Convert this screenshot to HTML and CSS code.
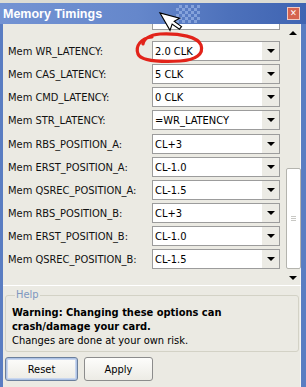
FILE: index.html
```html
<!DOCTYPE html>
<html lang="en">
<head>
<meta charset="UTF-8" />
<title>Memory Timings</title>
<link rel="stylesheet" href="styles.css">
</head>
<body>
<div class="topstrip"></div>
<div class="window">
  <div class="titlebar">
    <span class="title">Memory Timings</span>
    <span class="dither"></span>
    <span class="close">&#x2715;</span>
  </div>
  <div class="frame">
    <div class="client">
      <div class="scrollpane">
        <div class="list">
          <div class="stub"></div>
          <div class="group">
            <div class="row"><span class="label">Mem WR_LATENCY:</span><div class="combo"><span class="value">2.0 CLK</span><span class="drop"></span></div></div>
            <div class="row"><span class="label">Mem CAS_LATENCY:</span><div class="combo"><span class="value">5 CLK</span><span class="drop"></span></div></div>
            <div class="row"><span class="label">Mem CMD_LATENCY:</span><div class="combo"><span class="value">0 CLK</span><span class="drop"></span></div></div>
            <div class="row"><span class="label">Mem STR_LATENCY:</span><div class="combo"><span class="value">=WR_LATENCY</span><span class="drop"></span></div></div>
          </div>
          <div class="group second">
            <div class="row"><span class="label">Mem RBS_POSITION_A:</span><div class="combo"><span class="value">CL+3</span><span class="drop"></span></div></div>
            <div class="row"><span class="label">Mem ERST_POSITION_A:</span><div class="combo"><span class="value">CL-1.0</span><span class="drop"></span></div></div>
            <div class="row"><span class="label">Mem QSREC_POSITION_A:</span><div class="combo"><span class="value">CL-1.5</span><span class="drop"></span></div></div>
            <div class="row"><span class="label">Mem RBS_POSITION_B:</span><div class="combo"><span class="value">CL+3</span><span class="drop"></span></div></div>
            <div class="row"><span class="label">Mem ERST_POSITION_B:</span><div class="combo"><span class="value">CL-1.0</span><span class="drop"></span></div></div>
            <div class="row"><span class="label">Mem QSREC_POSITION_B:</span><div class="combo"><span class="value">CL-1.5</span><span class="drop"></span></div></div>
          </div>
        </div>
        <div class="scrollbar">
          <span class="arrow up"></span>
          <div class="track"><div class="thumb"><span class="grip"></span></div></div>
          <span class="arrow down"></span>
        </div>
      </div>
      <fieldset class="help">
        <legend>Help</legend>
        <p class="warn">Warning: Changing these options can crash/damage your card.</p>
        <p>Changes are done at your own risk.</p>
      </fieldset>
      <div class="buttons">
        <button class="btn default" type="button">Reset</button>
        <button class="btn apply" type="button">Apply</button>
      </div>
    </div>
  </div>
</div>

<svg class="scribble" width="306" height="387" viewBox="0 0 306 387" aria-hidden="true">
  <path d="M152 37 C141 38 135 46 138 54 C141 61 160 62 180 61 C196 60 204 54 201 45 C198 37 180 33 160 34 C150 35 144 38 143 44" fill="none" stroke="#e2231a" stroke-width="3.2" stroke-linecap="round"/>
</svg>
<svg class="cursor" width="306" height="387" viewBox="0 0 306 387" aria-hidden="true">
  <g transform="translate(160 13) rotate(-30) scale(1.25)">
    <path d="M0 0 L0 16 L4 12.5 L7 19 L9.5 18 L6.5 11.5 L11.5 11.5 Z" fill="#fff" stroke="#000" stroke-width="0.9" stroke-linejoin="miter"/>
  </g>
</svg>
</body>
</html>
```
FILE: styles.css
```css
body {
  margin: 0;
  width: 306px;
  height: 387px;
  overflow: hidden;
  background: #ebeae3;
  font-family: "DejaVu Sans Condensed", "DejaVu Sans", sans-serif;
  font-stretch: condensed;
  font-size: 11px;
  color: #000;
}

.topstrip {
  height: 3px;
  background: #dcdcd4;
}

.window {
  height: 384px;
  display: flex;
  flex-direction: column;
}

.titlebar {
  height: 21px;
  position: relative;
  display: flex;
  align-items: center;
  padding-left: 3px;
  background: linear-gradient(90deg, #7393d3 0%, #6587cb 45%, #4d71bb 75%, #3f64b2 100%);
}
.title {
  font-family: "Liberation Sans", Arial, sans-serif;
  font-stretch: normal;
  font-weight: bold;
  font-size: 12.5px;
  color: #fff;
  flex: 1;
}
.dither {
  position: absolute;
  left: 176px;
  top: 2px;
  width: 24px;
  height: 18px;
  background: conic-gradient(rgba(170,195,240,0.55) 25%, transparent 0 50%, rgba(170,195,240,0.55) 0 75%, transparent 0) 0 0 / 6px 6px;
}
.close {
  width: 11px;
  height: 11px;
  margin-right: 6px;
  border: 1px solid #f2c9c0;
  background: #d5634f;
  color: #fff;
  font-family: "DejaVu Sans", sans-serif;
  font-size: 9px;
  font-weight: bold;
  line-height: 11px;
  text-align: center;
}

.frame {
  flex: 1;
  display: flex;
  border-left: 3px solid #5a7dc2;
  border-right: 5px solid #5a7dc2;
}
.client {
  flex: 1;
  display: flex;
  flex-direction: column;
  background: #ebeae3;
  box-shadow: inset -1px 0 0 #f6f6f2;
}

.scrollpane {
  height: 261px;
  display: flex;
  border-bottom: 1px solid #fff;
}
.list {
  flex: 1;
  overflow: hidden;
  padding-left: 5px;
}
.stub {
  margin-left: 144px;
  width: 126px;
  height: 5px;
  background: #fff;
  border: 1px solid #9c9c9c;
  border-top: none;
}
.group {
  margin-top: 11px;
}
.group.second {
  margin-top: 4px;
}
.row {
  height: 20px;
  margin-bottom: 3px;
  display: flex;
  align-items: center;
}
.label {
  width: 144px;
  white-space: nowrap;
  color: #111;
}
.combo {
  width: 126px;
  height: 18px;
  border: 1px solid #9c9c9c;
  background: #fff;
  display: flex;
  align-items: center;
}
.value {
  flex: 1;
  padding-left: 2px;
}
.drop {
  width: 17px;
  height: 18px;
  background: #ecebe5;
  position: relative;
}
.drop::after {
  content: "";
  position: absolute;
  left: 5px;
  top: 7px;
  border-left: 4px solid transparent;
  border-right: 4px solid transparent;
  border-top: 4px solid #000;
}

.scrollbar {
  width: 16px;
  display: flex;
  flex-direction: column;
}
.arrow {
  height: 17px;
  position: relative;
}
.arrow::after {
  content: "";
  position: absolute;
  left: 4px;
  border-left: 4px solid transparent;
  border-right: 4px solid transparent;
}
.arrow.up::after {
  top: 7px;
  border-bottom: 4px solid #000;
}
.arrow.down::after {
  top: 7px;
  border-top: 4px solid #000;
}
.track {
  flex: 1;
  padding-top: 127px;
}
.thumb {
  margin-left: 1px;
  width: 13px;
  height: 99px;
  background: #fff;
  border: 1px solid #b4b4ae;
  border-radius: 2px;
  display: flex;
  align-items: center;
  justify-content: center;
}
.grip {
  width: 5px;
  height: 5px;
  background: repeating-linear-gradient(#c8c8c4 0 1px, transparent 1px 2px);
}

.help {
  margin: 3px 2px 0 2px;
  padding: 5px 6px 3px 6px;
  border: 1px solid #d3d2c6;
  border-radius: 3px;
  min-width: 0;
}
.help legend {
  padding: 0 1px;
  margin-left: 3px;
  color: #7d97c0;
  line-height: 12px;
}
.help p {
  margin: 0;
  line-height: 14px;
}
.help .warn {
  font-weight: bold;
}

.buttons {
  display: flex;
  gap: 6px;
  margin: 5px 0 0 2px;
}
.btn {
  height: 24px;
  font-family: inherit;
  font-stretch: condensed;
  font-size: 11px;
  color: #000;
  background: linear-gradient(#fdfdfb, #ecebe5);
  border: 1px solid #8c8c8c;
  border-radius: 3px;
  padding: 0;
}
.btn.default {
  width: 73px;
  box-shadow: inset 0 0 0 1px #aec3e6, inset 0 0 0 2px #c9d7ee;
  border-color: #6b7f9c;
}
.btn.apply {
  width: 69px;
}

.scribble,
.cursor {
  position: absolute;
  left: 0;
  top: 0;
  pointer-events: none;
}
```
